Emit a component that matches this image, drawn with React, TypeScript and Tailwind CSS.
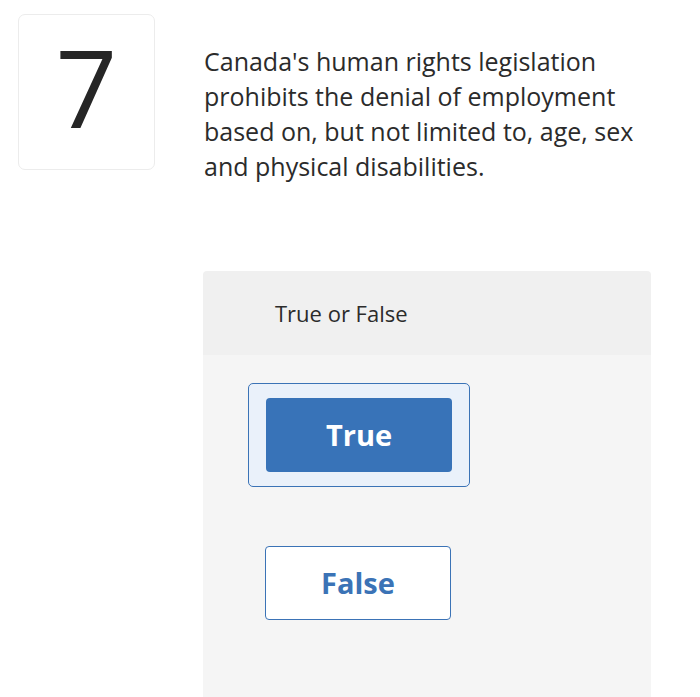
export default function App() {
  const font = { fontFamily: '"Open Sans", "Liberation Sans", sans-serif' };
  return (
    <div className="w-[700px] h-[697px] overflow-hidden bg-white" style={font}>
      <div className="flex pt-[14px] pl-[18px]">
        <div className="w-[137px] h-[156px] shrink-0 rounded-[7px] border border-[#ececec] bg-white flex items-center justify-center">
          <span className="text-[108px] leading-none text-[#262626] font-normal -mt-[10px]">7</span>
        </div>
        <div className="ml-[48px] flex flex-col">
          <p className="mt-[30px] ml-[1px] w-[450px] text-[25px] leading-[35px] text-[#2b2b2b]">
            Canada's human rights legislation prohibits the denial of employment based on, but not limited to, age, sex and physical disabilities.
          </p>
          <div className="mt-[87px] w-[448px] rounded-t-[4px] overflow-hidden">
            <div className="h-[84px] bg-[#f0f0f0] flex items-center pl-[72px]">
              <span className="text-[22px] text-[#2b2b2b]">True or False</span>
            </div>
            <div className="bg-[#f5f5f5] pt-[28px] pb-[120px] pl-[45px]">
              <div className="w-[222px] h-[104px] rounded-[5px] border-[1.5px] border-[#3b73b6] bg-[#eaf1fa] flex items-center justify-center">
                <div className="w-[186px] h-[74px] rounded-[4px] bg-[#3873b8] flex items-center justify-center">
                  <span className="text-[29px] font-bold text-white">True</span>
                </div>
              </div>
              <div className="ml-[17px] mt-[59px] w-[186px] h-[74px] rounded-[4px] border-[1.5px] border-[#3b73b6] bg-white flex items-center justify-center">
                <span className="text-[29px] font-bold text-[#3b73b6]">False</span>
              </div>
            </div>
          </div>
        </div>
      </div>
    </div>
  );
}
